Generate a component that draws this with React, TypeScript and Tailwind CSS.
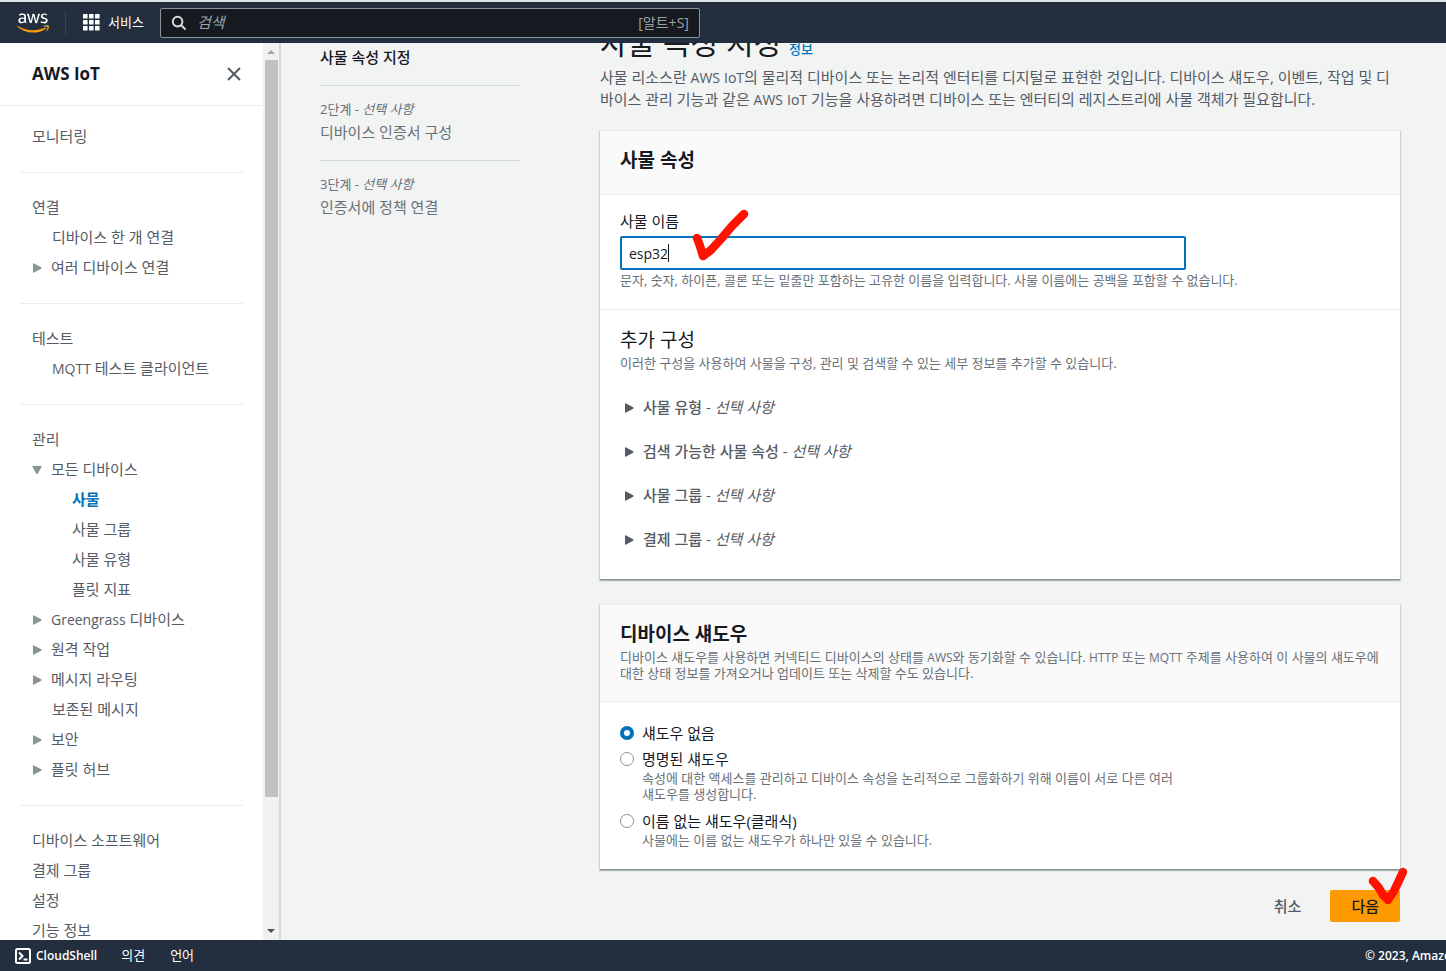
import React, { useState } from 'react';
import { FaAws } from 'react-icons/fa';

interface NavItem {
  label: string;
  level: number;
  expander?: 'open' | 'closed';
  active?: boolean;
}

const navSections: NavItem[][] = [
  [{ label: '모니터링', level: 0 }],
  [
    { label: '연결', level: 0 },
    { label: '디바이스 한 개 연결', level: 1 },
    { label: '여러 디바이스 연결', level: 1, expander: 'closed' },
  ],
  [
    { label: '테스트', level: 0 },
    { label: 'MQTT 테스트 클라이언트', level: 1 },
  ],
  [
    { label: '관리', level: 0 },
    { label: '모든 디바이스', level: 1, expander: 'open' },
    { label: '사물', level: 2, active: true },
    { label: '사물 그룹', level: 2 },
    { label: '사물 유형', level: 2 },
    { label: '플릿 지표', level: 2 },
    { label: 'Greengrass 디바이스', level: 1, expander: 'closed' },
    { label: '원격 작업', level: 1, expander: 'closed' },
    { label: '메시지 라우팅', level: 1, expander: 'closed' },
    { label: '보존된 메시지', level: 1 },
    { label: '보안', level: 1, expander: 'closed' },
    { label: '플릿 허브', level: 1, expander: 'closed' },
  ],
  [
    { label: '디바이스 소프트웨어', level: 0 },
    { label: '결제 그룹', level: 0 },
    { label: '설정', level: 0 },
    { label: '기능 정보', level: 0 },
  ],
];

const steps = [
  { step: '2단계', title: '디바이스 인증서 구성' },
  { step: '3단계', title: '인증서에 정책 연결' },
];

const extraSections = ['사물 유형', '검색 가능한 사물 속성', '사물 그룹', '결제 그룹'];

const shadowOptions = [
  { id: 'none', label: '섀도우 없음', description: '' },
  {
    id: 'named',
    label: '명명된 섀도우',
    description:
      '속성에 대한 액세스를 관리하고 디바이스 속성을 논리적으로 그룹화하기 위해 이름이 서로 다른 여러 섀도우를 생성합니다.',
  },
  {
    id: 'classic',
    label: '이름 없는 섀도우(클래식)',
    description: '사물에는 이름 없는 섀도우가 하나만 있을 수 있습니다.',
  },
];

// 한글과 섞인 영문은 한 단계 작게 표시
function MixedText({ text, latin }: { text: string; latin: string }) {
  return (
    <>
      {text.split(/([A-Za-z]+)/).map((part, i) =>
        i % 2 === 1 ? (
          <span key={i} className={latin}>
            {part}
          </span>
        ) : (
          part
        )
      )}
    </>
  );
}

function Triangle({ open, className }: { open?: boolean; className: string }) {
  return (
    <svg viewBox="0 0 10 11" className={`w-[10px] h-[11px] shrink-0 ${className}`} fill="currentColor">
      <path d={open ? 'M0 2H10L5.8 9.5Q5 10.6 4.2 9.5Z' : 'M1 1L9.2 5.3Q10 6 9.2 6.7L1 11Z'} />
    </svg>
  );
}

function TopBar() {
  return (
    <header className="h-[43px] shrink-0 flex items-center bg-[#232f3e] border-t-2 border-[#dfe4ea] text-white">
      <svg width="0" height="0">
        <defs>
          <linearGradient id="awsFill" gradientUnits="userSpaceOnUse" x1="0" y1="0" x2="0" y2="512">
            <stop offset="0.62" stopColor="#ffffff" />
            <stop offset="0.62" stopColor="#ff9900" />
          </linearGradient>
        </defs>
      </svg>
      <a href="#home" aria-label="AWS" className="ml-[17px]">
        <FaAws size={32} fill="url(#awsFill)" />
      </a>
      <div className="w-px h-[22px] ml-4 bg-[#3a4553]" />
      <button className="flex items-center gap-2 ml-[17px] text-[13px]">
        <svg viewBox="0 0 17 17" className="w-[17px] h-[17px]" fill="currentColor">
          {[0, 6, 12].map((y) => [0, 6, 12].map((x) => <rect key={`${x}-${y}`} x={x} y={y} width="4.6" height="4.6" rx="0.6" />))}
        </svg>
        서비스
      </button>
      <label className="ml-4 w-[540px] h-[30px] flex items-center px-[10px] bg-[#16191f] border border-[#879596] rounded-[2px]">
        <svg viewBox="0 0 16 16" className="w-4 h-4 shrink-0" fill="none" stroke="#d5dbdb" strokeWidth="2">
          <circle cx="6.6" cy="6.6" r="4.8" />
          <path d="M10.2 10.2L14.6 14.6" />
        </svg>
        <input
          type="search"
          placeholder="검색"
          className="flex-1 min-w-0 ml-[10px] bg-transparent text-[15px] placeholder:italic placeholder:text-[#95a5a6] outline-none"
        />
        <span className="text-sm text-[#95a5a6]">[알트+S]</span>
      </label>
    </header>
  );
}

function Sidebar() {
  return (
    <aside className="w-[281px] shrink-0 flex overflow-hidden bg-white border-r-2 border-[#d5dbdb]">
      <div className="flex-1 min-w-0">
        <div className="h-[63px] flex items-center justify-between pl-8 pr-[21px] border-b border-[#eaeded]">
          <h2 className="text-[17px] font-bold text-[#16191f]">AWS IoT</h2>
          <button aria-label="닫기" className="text-[#545b64]">
            <svg viewBox="0 0 16 16" className="w-4 h-4" fill="none" stroke="currentColor" strokeWidth="2">
              <path d="M2 2L14 14M14 2L2 14" />
            </svg>
          </button>
        </div>
        <nav className="px-5 pt-[15px]">
          {navSections.map((section, i) => (
            <ul key={i} className="pb-[21px] mb-[19px] border-b border-[#eaeded]">
              {section.map((item) => (
                <li
                  key={item.label}
                  className={`h-[30px] flex items-center whitespace-nowrap text-[15px] ${
                    item.level === 2 ? 'pl-[52px]' : item.level === 1 && !item.expander ? 'pl-8' : 'pl-3'
                  } ${item.active ? 'font-bold text-[#0073bb]' : 'text-[#545b64]'}`}
                >
                  {item.expander && (
                    <Triangle open={item.expander === 'open'} className="mr-[9px] text-[#879596]" />
                  )}
                  <a href="#nav">
                    <MixedText text={item.label} latin="text-sm leading-none" />
                  </a>
                </li>
              ))}
            </ul>
          ))}
        </nav>
      </div>
      <div className="w-4 shrink-0 flex flex-col items-center bg-[#f1f1f1]">
        <svg viewBox="0 0 16 17" className="w-4 h-[17px] shrink-0" fill="#a3a3a3">
          <path d="M4 11L8 7L12 11Z" />
        </svg>
        <div className="w-[13px] h-[737px] bg-[#c1c1c1]" />
        <svg viewBox="0 0 16 17" className="w-4 h-[17px] shrink-0 mt-auto" fill="#505050">
          <path d="M4 6L8 10L12 6Z" />
        </svg>
      </div>
    </aside>
  );
}

function Steps() {
  return (
    <ol className="w-[200px] shrink-0 pt-[3px] text-[#687078]">
      <li className="h-[39px] text-[15px] leading-[22px] font-medium text-[#16191f]">사물 속성 지정</li>
      {steps.map((s) => (
        <li key={s.step} className="h-[75px] pt-3 border-t border-[#d5dbdb]">
          <div className="text-[13px] leading-[22px]">
            {s.step} - <i>선택 사항</i>
          </div>
          <div className="text-[15px] leading-6">{s.title}</div>
        </li>
      ))}
    </ol>
  );
}

function Card({ header, children }: { header: React.ReactNode; children: React.ReactNode }) {
  return (
    <section className="bg-white border-t border-t-[#eaeded] border-b border-b-[#879596] shadow-[1px_1px_1px_0_rgba(0,28,36,0.15),-1px_1px_1px_0_rgba(0,28,36,0.15)]">
      <div className="px-5 pt-[15px] pb-5 bg-[#fafafa] border-b border-[#eaeded]">{header}</div>
      {children}
    </section>
  );
}

function CheckMark({ d, className }: { d: string; className: string }) {
  return (
    <svg
      viewBox="0 0 58 54"
      className={`absolute w-[58px] h-[54px] pointer-events-none ${className}`}
      fill="none"
      stroke="#ff1200"
      strokeLinecap="round"
      strokeLinejoin="round"
      strokeWidth="8.5"
    >
      <path d={d} />
    </svg>
  );
}

function ThingProperties() {
  const [name, setName] = useState('esp32');

  return (
    <Card header={<h2 className="text-[19px] leading-7 font-bold">사물 속성</h2>}>
      <div className="px-5 pt-[15px] pb-[21px] border-b border-[#eaeded]">
        <label htmlFor="thing-name" className="block text-[15px] leading-[22px]">
          사물 이름
        </label>
        <div className="relative mt-1">
          <input
            id="thing-name"
            type="text"
            value={name}
            onChange={(e) => setName(e.target.value)}
            className="block w-full max-w-[566px] h-[34px] px-[7px] bg-white border-2 border-[#0073bb] rounded-[2px] text-sm text-[#16191f] outline-none"
          />
          <span className="absolute left-12 top-2 w-px h-[18px] bg-[#16191f]" />
          <CheckMark className="left-[72px] -top-[28px]" d="M5 30L8 38L11 48L19 42L29 31L40 18L52 6" />
        </div>
        <p className="mt-[2px] text-[13px] leading-4 text-[#687078]">
          문자, 숫자, 하이픈, 콜론 또는 밑줄만 포함하는 고유한 이름을 입력합니다. 사물 이름에는 공백을 포함할 수 없습니다.
        </p>
      </div>
      <div className="px-5 pt-4 pb-[18px]">
        <h3 className="text-[19px] leading-7">추가 구성</h3>
        <p className="mt-[1px] mb-[14px] text-[13px] leading-4 text-[#687078]">
          이러한 구성을 사용하여 사물을 구성, 관리 및 검색할 수 있는 세부 정보를 추가할 수 있습니다.
        </p>
        {extraSections.map((title) => (
          <button key={title} className="h-11 w-full flex items-center pl-1 text-[15px] text-[#545b64]">
            <Triangle className="mr-[9px]" />
            <span className="font-medium">{title}</span>
            <span className="whitespace-pre">
              {' - '}
              <i>선택 사항</i>
            </span>
          </button>
        ))}
      </div>
    </Card>
  );
}

function DeviceShadow() {
  const [selected, setSelected] = useState('none');

  return (
    <Card
      header={
        <>
          <h2 className="text-[19px] leading-7 font-bold">디바이스 섀도우</h2>
          <p className="mt-[1px] text-[13px] leading-4 text-[#687078] break-keep">
            <MixedText
              latin="text-xs leading-none"
              text="디바이스 섀도우를 사용하면 커넥티드 디바이스의 상태를 AWS와 동기화할 수 있습니다. HTTP 또는 MQTT 주제를 사용하여 이 사물의 섀도우에 대한 상태 정보를 가져오거나 업데이트 또는 삭제할 수도 있습니다."
            />
          </p>
        </>
      }
    >
      <div className="px-5 pt-5 pb-[17px] flex flex-col gap-1">
        {shadowOptions.map((option) => (
          <div key={option.id} className="flex items-start gap-2">
            <input
              type="radio"
              name="shadow"
              id={`shadow-${option.id}`}
              checked={selected === option.id}
              onChange={() => setSelected(option.id)}
              className="appearance-none w-[14px] h-[14px] mt-1 shrink-0 rounded-full bg-white border border-[#879596] checked:border-4 checked:border-[#0073bb]"
            />
            <div className="max-w-[544px]">
              <label htmlFor={`shadow-${option.id}`} className="block text-[15px] leading-[22px]">
                {option.label}
              </label>
              {option.description && (
                <p className="pb-1 text-[13px] leading-4 text-[#687078] break-keep">{option.description}</p>
              )}
            </div>
          </div>
        ))}
      </div>
    </Card>
  );
}

function Footer() {
  return (
    <footer className="h-[31px] shrink-0 flex items-center pl-[15px] overflow-hidden whitespace-nowrap bg-[#232f3e] text-[13px] text-white">
      <button className="flex items-center gap-[5px] text-xs font-semibold">
        <svg viewBox="0 0 16 16" className="w-4 h-4" fill="none" stroke="currentColor" strokeWidth="2">
          <rect x="1" y="1" width="14" height="14" rx="1.5" />
          <path d="M4 4.5L7.5 8L4 11.5M8.5 11.5H12.5" />
        </svg>
        CloudShell
      </button>
      <a href="#feedback" className="ml-6">
        의견
      </a>
      <a href="#language" className="ml-[25px]">
        언어
      </a>
      <span className="ml-auto w-[81px] shrink-0 overflow-hidden text-xs font-semibold">© 2023, Amazon</span>
    </footer>
  );
}

export default function App() {
  return (
    <div className="h-screen flex flex-col overflow-hidden font-['Open_Sans','Noto_Sans_CJK_KR',sans-serif] text-[#16191f]">
      <TopBar />
      <div className="flex-1 min-h-0 flex">
        <Sidebar />
        <main className="flex-1 min-w-0 flex gap-20 pl-[39px] pr-[46px] overflow-hidden bg-[#f2f3f3]">
          <Steps />
          <div className="flex-1 min-w-0 -mt-[18px]">
            <h1 className="text-[30px] leading-9">
              사물 속성 지정{' '}
              <a href="#info" className="text-[13px] leading-none font-medium text-[#0073bb]">
                정보
              </a>
            </h1>
            <p className="mt-[5px] mb-5 text-[15px] leading-[22px] text-[#545b64]">
              <MixedText
                latin="text-sm leading-none"
                text="사물 리소스란 AWS IoT의 물리적 디바이스 또는 논리적 엔터티를 디지털로 표현한 것입니다. 디바이스 섀도우, 이벤트, 작업 및 디바이스 관리 기능과 같은 AWS IoT 기능을 사용하려면 디바이스 또는 엔터티의 레지스트리에 사물 객체가 필요합니다."
              />
            </p>
            <div className="flex flex-col gap-6">
              <ThingProperties />
              <DeviceShadow />
            </div>
            <div className="mt-5 flex justify-end items-center">
              <button className="h-8 px-5 text-[15px] font-medium text-[#545b64]">취소</button>
              <div className="relative ml-[9px]">
                <button className="h-8 px-[21px] rounded-[2px] bg-[#ff9900] text-[15px] font-medium text-[#16191f]">다음</button>
                <CheckMark className="left-[35px] -top-[26px]" d="M8 17L14 24L18 31L23 36L29 27L38 8" />
              </div>
            </div>
          </div>
        </main>
      </div>
      <Footer />
    </div>
  );
}
